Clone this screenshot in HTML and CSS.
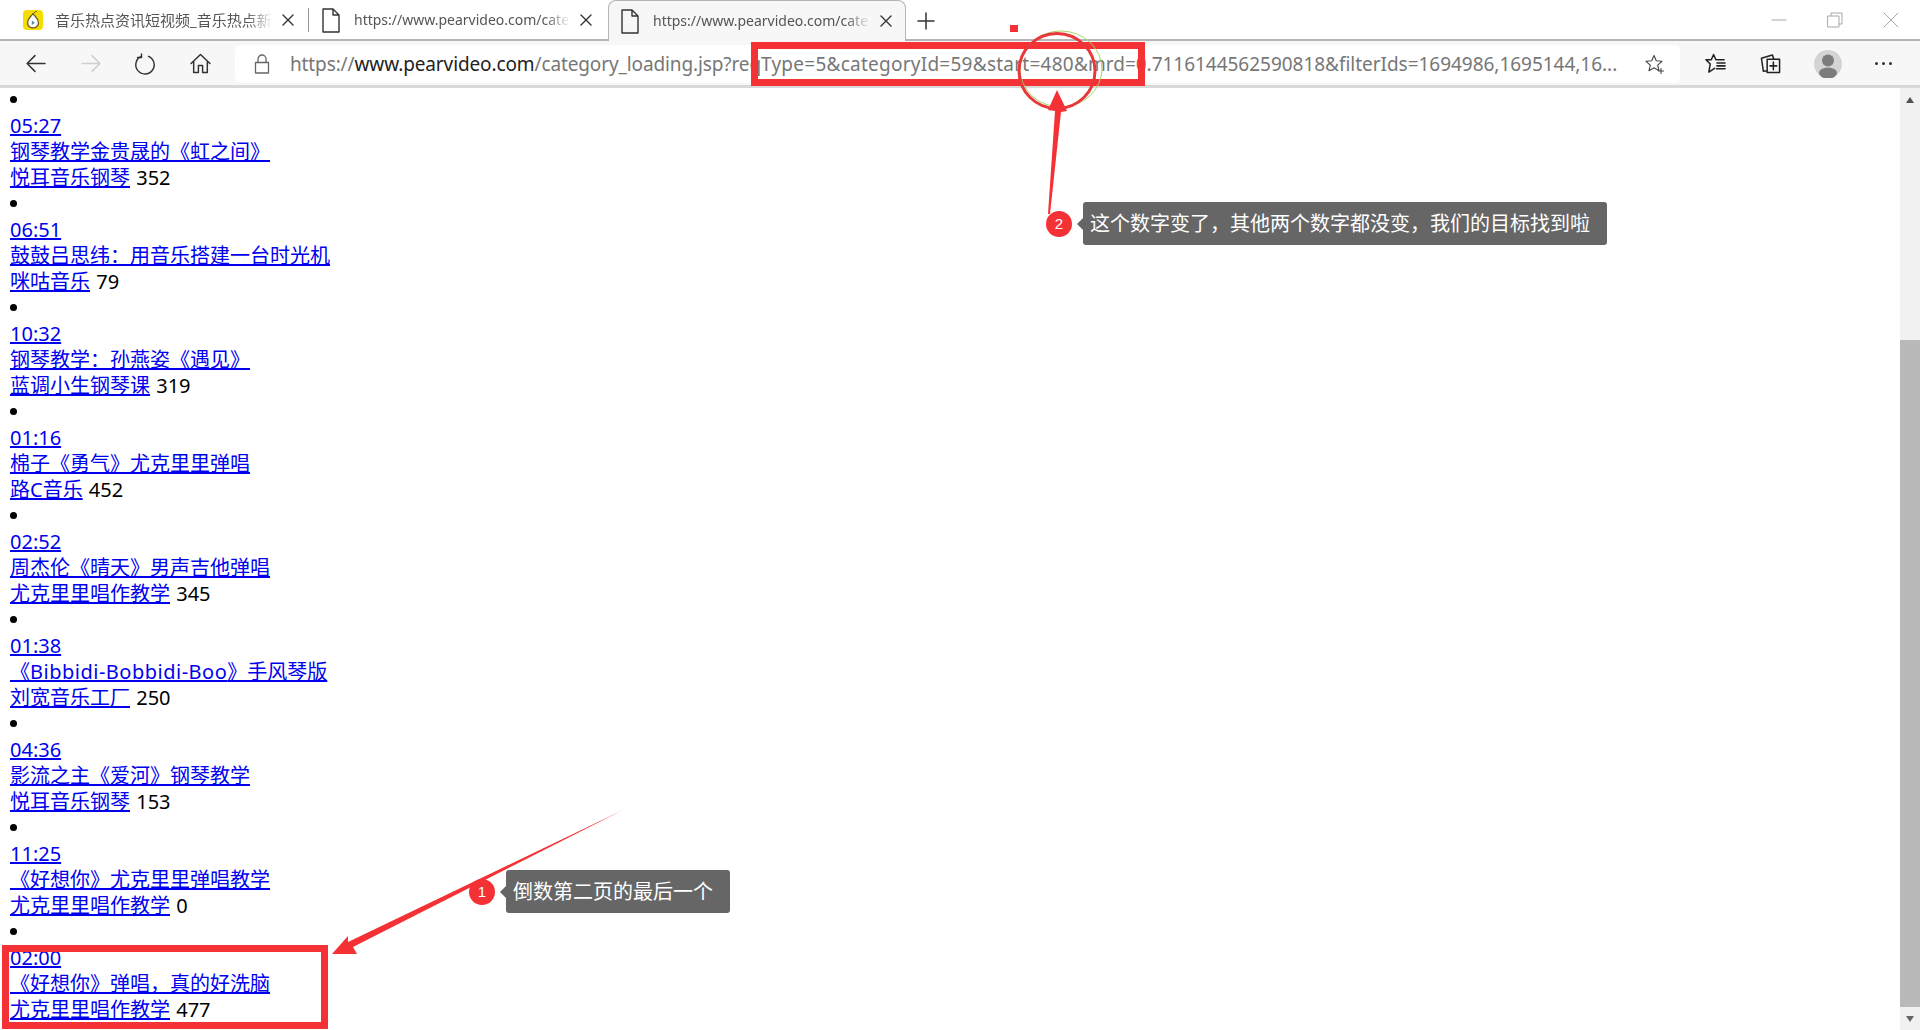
FILE: index.html
```html
<!DOCTYPE html>
<html lang="en">
<head>
  <meta charset="UTF-8">
  <meta name="viewport" content="width=device-width, initial-scale=1.0">
  <title>category_loading.jsp</title>
  <link rel="stylesheet" href="styles.css">
</head>
<body>
  <div class="browser">
    <!-- Tab strip -->
    <div class="tabstrip">
      <div class="tab tab-first">
        <svg class="favicon" viewBox="0 0 20 20">
          <rect width="20" height="20" rx="4" fill="#f5dd00"/>
          <path d="M10 3.500c-1.500 3-5.500 4.500-5.500 9.500a5.500 4.800 0 0 0 11 0c0-5-4-6.500-5.500-9.500z" fill="#fff" stroke="#6a5a20" stroke-width="1.300"/>
          <path d="M8.800 10.500l3.200 2.200-3.200 2.200z" fill="#5f8aa0"/>
          <path d="M10.500 3.500c.8-1.300 2-2 3-2" fill="none" stroke="#6a5a20" stroke-width="1"/>
        </svg>
        <span class="tab-title">音乐热点资讯短视频_音乐热点新</span>
        <svg class="tab-close" viewBox="0 0 12 12"><path d="M1 1l10 10M11 1L1 11"/></svg>
      </div>
      <div class="tab tab-second">
        <svg class="doc" viewBox="0 0 18 25"><path d="M1 1h10l6 6v17H1zM11 1v6h6"/></svg>
        <span class="tab-title">https://www.pearvideo.com/cate</span>
        <svg class="tab-close" viewBox="0 0 12 12"><path d="M1 1l10 10M11 1L1 11"/></svg>
      </div>
      <div class="tab tab-active">
        <svg class="doc" viewBox="0 0 18 25"><path d="M1 1h10l6 6v17H1zM11 1v6h6"/></svg>
        <span class="tab-title">https://www.pearvideo.com/cate</span>
        <svg class="tab-close" viewBox="0 0 12 12"><path d="M1 1l10 10M11 1L1 11"/></svg>
      </div>
      <svg class="new-tab" viewBox="0 0 18 18"><path d="M9 1v16M1 9h16"/></svg>
      <div class="window-controls">
        <svg viewBox="0 0 16 16"><path d="M1 8h14"/></svg>
        <svg viewBox="0 0 16 16"><path d="M1 4h11v11H1zM4 4V1h11v11h-3"/></svg>
        <svg viewBox="0 0 16 16"><path d="M1 1l14 14M15 1L1 15"/></svg>
      </div>
    </div>

    <!-- Toolbar -->
    <div class="toolbar">
      <svg class="tool tool-back" viewBox="0 0 20 20"><path d="M19 10H2M9.500 2.500L2 10l7.500 7.500"/></svg>
      <svg class="tool tool-forward" viewBox="0 0 20 20"><path d="M1 10h17M10.500 2.500L18 10l-7.500 7.500"/></svg>
      <svg class="tool tool-reload" viewBox="0 0 22 22"><path d="M7 3.500a9.200 9.200 0 1 0 7.500-.2M7.500 1v3.500H3.500"/></svg>
      <svg class="tool tool-home" viewBox="0 0 20 20"><path d="M1 10l9-8.500L19 10M3.500 8v10.500h4.500v-6.500h4v6.500h4.500V8"/></svg>
      <div class="addressbar">
        <svg class="lock" viewBox="0 0 16 20"><path d="M1.500 8.500h13v10.500h-13zM4 8.500V5a4 4 0 0 1 8 0v3.500"/></svg>
        <span class="url"><span class="url-path">https://<span class="url-host">www.pearvideo.com</span>/category_loading.jsp?req</span><span class="url-query">Type=5&amp;categoryId=59&amp;start=480&amp;</span><span class="url-rest">mrd=0.7116144562590818&amp;filterIds=1694986,1695144,16...</span></span>
        <svg class="star" viewBox="0 0 20 20"><path d="M9 1.500l2.300 5.300 5.700.5-4.300 3.800 1.300 5.600L9 13.800l-5 2.900 1.300-5.600L1 7.300l5.700-.5zM13.500 17h5M16 14.500v5"/></svg>
      </div>
      <div class="toolbar-right">
        <svg class="tool tool-heavy" viewBox="0 0 22 22"><path d="M9 1.500l2.400 5.500H20M9 1.500L6.600 7H1l4.500 4.500L4 20l6-4M12.500 10.500H21M12.500 13.500H21M12 16.500h9"/></svg>
        <svg class="tool tool-heavy" viewBox="0 0 22 22"><path d="M7.500 6.500h13v14h-13zM14 9.500v8M10.500 13.500h7M7.500 18.500L3.500 19 1.500 5.500 13 2l1.500 4.500"/></svg>
        <svg class="avatar" viewBox="0 0 28 28">
          <circle cx="14" cy="14" r="14" fill="#d4d4d4"/>
          <circle cx="14" cy="10.500" r="6" fill="#7c7c7c"/>
          <ellipse cx="14" cy="23" rx="9" ry="5.500" fill="#7c7c7c"/>
        </svg>
        <span class="more">
          <i></i><i></i><i></i>
        </span>
      </div>
    </div>

    <!-- Page content -->
    <div class="viewport">
      <ul class="video-list">
        <li>
          <a href="#">05:27</a>
          <a href="#">钢琴教学金贵晟的《虹之间》</a>
          <div><a class="author" href="#">悦耳音乐钢琴</a> 352</div>
        </li>
        <li>
          <a href="#">06:51</a>
          <a href="#">鼓鼓吕思纬：用音乐搭建一台时光机</a>
          <div><a class="author" href="#">咪咕音乐</a> 79</div>
        </li>
        <li>
          <a href="#">10:32</a>
          <a href="#">钢琴教学：孙燕姿《遇见》</a>
          <div><a class="author" href="#">蓝调小生钢琴课</a> 319</div>
        </li>
        <li>
          <a href="#">01:16</a>
          <a href="#">棉子《勇气》尤克里里弹唱</a>
          <div><a class="author" href="#">路C音乐</a> 452</div>
        </li>
        <li>
          <a href="#">02:52</a>
          <a href="#">周杰伦《晴天》男声吉他弹唱</a>
          <div><a class="author" href="#">尤克里里唱作教学</a> 345</div>
        </li>
        <li>
          <a href="#">01:38</a>
          <a href="#">《<span class="latin">Bibbidi-Bobbidi-Boo</span>》手风琴版</a>
          <div><a class="author" href="#">刘宽音乐工厂</a> 250</div>
        </li>
        <li>
          <a href="#">04:36</a>
          <a href="#">影流之主《爱河》钢琴教学</a>
          <div><a class="author" href="#">悦耳音乐钢琴</a> 153</div>
        </li>
        <li>
          <a href="#">11:25</a>
          <a href="#">《好想你》尤克里里弹唱教学</a>
          <div><a class="author" href="#">尤克里里唱作教学</a> 0</div>
        </li>
        <li>
          <a href="#">02:00</a>
          <a href="#">《好想你》弹唱，真的好洗脑</a>
          <div><a class="author" href="#">尤克里里唱作教学</a> 477</div>
        </li>
      </ul>
      <div class="scrollbar">
        <div class="scroll-up"></div>
        <div class="scroll-thumb"></div>
        <div class="scroll-down"></div>
      </div>
    </div>
  </div>

  <!-- Annotations drawn on top of the screenshot -->
  <svg class="marks" viewBox="0 0 1920 1030">
    <rect class="mark-box" x="754.500" y="45.500" width="387" height="37"/>
    <rect class="mark-box" x="5.500" y="948.500" width="319" height="77"/>
    <ellipse class="mark-ring-thin" cx="1061" cy="69" rx="41" ry="38"/>
    <ellipse class="mark-ring" cx="1057" cy="71" rx="38" ry="37.500"/>
    <rect class="mark-dot" x="1010" y="25" width="8" height="7"/>
    <path class="mark-arrow" d="M1057 90l10 21-6 1-11 102-2 0 7-103-7-1z"/>
    <path class="mark-arrow" d="M332 954l16-18 0 6 275-132-270 137 4 7z"/>
  </svg>
  <div class="note note-one">
    <span class="note-num">1</span>
    <span class="note-text">倒数第二页的最后一个</span>
  </div>
  <div class="note note-two">
    <span class="note-num">2</span>
    <span class="note-text">这个数字变了，其他两个数字都没变，我们的目标找到啦</span>
  </div>
</body>
</html>
```

FILE: styles.css
```css
body {
  margin: 0;
  height: 1030px;
  overflow: hidden;
  background: #fff;
  font-family: "Noto Sans", "Noto Sans CJK SC", sans-serif;
}
.browser {
  display: flex;
  flex-direction: column;
  height: 100%;
}
svg {
  flex: none;
  fill: none;
  stroke-linecap: round;
  stroke-linejoin: round;
}

/* tab strip */
.tabstrip {
  display: flex;
  align-items: flex-end;
  height: 41px;
  box-sizing: border-box;
  border-bottom: 2px solid #b5b5b5;
}
.tab {
  display: flex;
  align-items: center;
  box-sizing: border-box;
  height: 38px;
  font-size: 14px;
  color: #555;
}
.tab-first {
  width: 308px;
  padding-left: 23px;
  font-size: 15px;
}
.tab-second {
  width: 300px;
  padding-left: 13px;
  border-left: 1px solid #999;
  height: 24px;
  margin-bottom: 7px;
}
.tab-active {
  width: 298px;
  height: 41px;
  margin-bottom: -2px;
  padding-left: 12px;
  background: #f7f7f7;
  border: 1px solid #b5b5b5;
  border-bottom: none;
  border-radius: 8px 8px 0 0;
}
.favicon {
  width: 20px;
  height: 20px;
  margin-right: 12px;
}
.doc {
  width: 18px;
  height: 25px;
  margin-right: 14px;
  stroke: #333;
  stroke-width: 1.4;
}
.tab-title {
  width: 217px;
  padding-bottom: 2px;
  overflow: hidden;
  white-space: nowrap;
  -webkit-mask-image: linear-gradient(to right, #000 88%, transparent);
  mask-image: linear-gradient(to right, #000 88%, transparent);
}
.tab-active .tab-title {
  width: 218px;
}
.tab-first .tab-title {
  width: 218px;
}
.tab-close {
  width: 12px;
  height: 12px;
  margin-left: 9px;
  stroke: #333;
  stroke-width: 1.4;
}
.new-tab {
  width: 18px;
  height: 18px;
  margin: 0 0 9px 11px;
  stroke: #333;
  stroke-width: 1.5;
}
.window-controls {
  display: flex;
  gap: 40px;
  margin-left: auto;
  margin-right: 21px;
  margin-bottom: 11px;
}
.window-controls svg {
  width: 16px;
  height: 16px;
  stroke: #a8a8a8;
  stroke-width: 1;
}

/* toolbar */
.toolbar {
  display: flex;
  align-items: center;
  height: 47px;
  box-sizing: border-box;
  background: #f7f7f7;
  border-bottom: 3px solid #d9d9d9;
  padding: 1px 0 0 25px;
}
.tool {
  width: 21px;
  height: 21px;
  stroke: #333;
  stroke-width: 1.4;
}
.tool-heavy {
  stroke: #222;
  stroke-width: 1.6;
}
.tool-forward {
  margin-left: 35px;
  stroke: #cfcfcf;
}
.tool-reload {
  width: 22px;
  height: 22px;
  margin-left: 32px;
}
.tool-home {
  margin-left: 34px;
}
.addressbar {
  display: flex;
  align-items: center;
  width: 1445px;
  height: 38px;
  margin-left: 24px;
  background: #fff;
  border-radius: 5px;
}
.lock {
  width: 16px;
  height: 20px;
  margin-left: 19px;
  stroke: #666;
  stroke-width: 1.3;
}
.url {
  margin-left: 20px;
  width: 1330px;
  font-size: 19px;
  white-space: nowrap;
  overflow: hidden;
  color: #777;
}
.url-path {
  letter-spacing: -0.12px;
}
.url-host {
  color: #222;
}
.url-query {
  letter-spacing: 0.25px;
}
.url-rest {
  letter-spacing: -0.03px;
}
.star {
  width: 20px;
  height: 20px;
  margin-left: 25px;
  stroke: #444;
  stroke-width: 1.1;
}
.toolbar-right {
  display: flex;
  align-items: center;
  margin-left: 25px;
  gap: 34px;
}
.avatar {
  width: 28px;
  height: 28px;
  margin-left: -1px;
}
.more {
  display: flex;
  gap: 4px;
  margin-left: -1px;
}
.more i {
  width: 3px;
  height: 3px;
  border-radius: 50%;
  background: #333;
}

/* page */
.viewport {
  display: flex;
  flex: 1;
  min-height: 0;
}
.video-list {
  flex: 1;
  margin: -1px 0 0 0;
  padding: 0 0 0 10px;
  list-style: none;
  font-size: 20px;
  line-height: 26px;
  color: #000;
}
.video-list li::before {
  content: "";
  display: block;
  width: 7px;
  height: 7px;
  margin: 9px 0 10px 0;
  border-radius: 50%;
  background: #000;
}
.video-list li > a {
  display: table;
}
.video-list li > div {
  word-spacing: 1px;
}
.video-list a {
  color: #0000ee;
}
.latin {
  letter-spacing: 0.5px;
}

/* scrollbar */
.scrollbar {
  display: flex;
  flex-direction: column;
  width: 20px;
  background: #f1f1f1;
}
.scroll-up {
  width: 0;
  height: 0;
  margin: 9px auto 0;
  border: 4px solid transparent;
  border-top: none;
  border-bottom: 6px solid #505050;
}
.scroll-thumb {
  height: 667px;
  margin-top: 237px;
  background: #b9b9b9;
}
.scroll-down {
  width: 0;
  height: 0;
  margin: auto auto 8px;
  border: 4px solid transparent;
  border-bottom: none;
  border-top: 6px solid #666;
}

/* annotations */
.marks {
  position: absolute;
  left: 0;
  top: 0;
  width: 1920px;
  height: 1030px;
  pointer-events: none;
}
.mark-box {
  fill: none;
  stroke: #f43236;
  stroke-width: 7;
  stroke-linejoin: miter;
}
.mark-ring {
  fill: none;
  stroke: #e8383a;
  stroke-width: 3;
}
.mark-ring-thin {
  fill: none;
  stroke: #a8d66a;
  stroke-width: 1;
}
.mark-dot, .mark-arrow {
  fill: #f43236;
}
.note {
  position: absolute;
  display: flex;
  align-items: center;
}
.note-one {
  left: 469px;
  top: 870px;
}
.note-two {
  left: 1046px;
  top: 202px;
}
.note-num {
  width: 26px;
  height: 26px;
  margin-right: 11px;
  border-radius: 50%;
  background: #f43236;
  color: #fff;
  font-family: "Liberation Sans", sans-serif;
  font-size: 15px;
  line-height: 26px;
  text-align: center;
}
.note-text {
  position: relative;
  height: 43px;
  padding: 0 17px 0 7px;
  border-radius: 3px;
  background: #666;
  color: #fff;
  font-size: 20px;
  line-height: 43px;
  white-space: nowrap;
}
.note-text::before {
  content: "";
  position: absolute;
  left: -6px;
  top: 16px;
  border: 6px solid transparent;
  border-left: none;
  border-right-color: #666;
}
```
